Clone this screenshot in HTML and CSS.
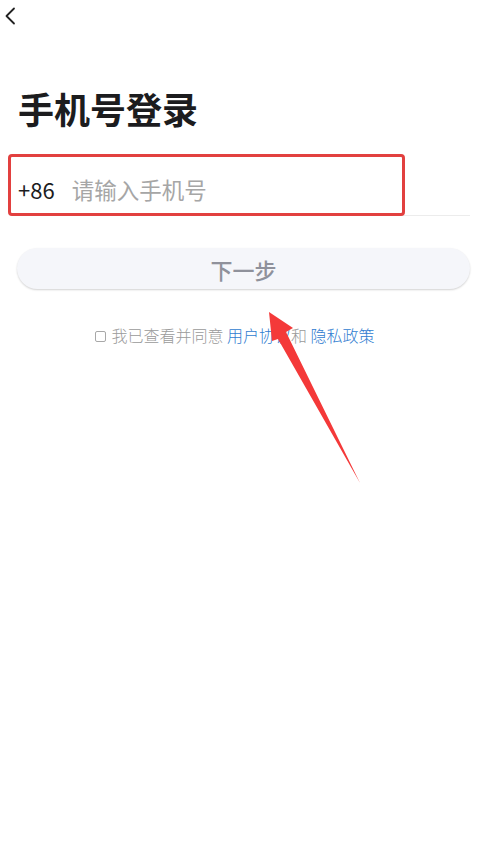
FILE: index.html
```html
<!DOCTYPE html>
<html lang="zh-CN">
<head>
  <meta charset="UTF-8">
  <title>手机号登录</title>
  <link rel="stylesheet" href="styles.css">
</head>
<body>

  <header class="topbar">
    <a class="back">
      <svg width="12" height="18" viewBox="0 0 12 18">
        <polyline points="10,1.5 2.5,9 10,16.5" fill="none" stroke="#222" stroke-width="1.8" stroke-linecap="round" stroke-linejoin="round"/>
      </svg>
    </a>
  </header>

  <main class="login">
    <h1 class="title">手机号登录</h1>

    <div class="phone-row">
      <span class="prefix">+86</span>
      <input type="tel" class="phone-input" placeholder="请输入手机号">
      <!-- zaznaczenie -->
      <div class="highlight"></div>
    </div>

    <button class="next-btn">下一步</button>

    <p class="agreement">
      <span class="check"></span>我已查看并同意 <a>用户协议</a>和 <a>隐私政策</a>
    </p>
  </main>

  <!-- strzałka -->
  <svg class="arrow" width="486" height="853" viewBox="0 0 486 853">
    <polygon points="269,312 293,328 286,332 360,483 278,339 272,341" fill="#f43939"/>
  </svg>

</body>
</html>
```

FILE: styles.css
```css
body {
  font-family: "Noto Sans CJK SC", "Noto Sans", sans-serif;
  background: #fff;
  margin: 0;
  padding: 0;
  position: relative;
  min-height: 853px;
}
.topbar {
  height: 30px;
  padding: 6px 0 0 4px;
  box-sizing: border-box;
}
.back {
  display: inline-block;
}
.login {
  padding: 0 16px 0 18px;
}
.title {
  margin: 52px 0 0 0;
  font-size: 36px;
  line-height: 52px;
  font-weight: 700;
  color: #1c1c1e;
}
.phone-row {
  position: relative;
  display: flex;
  align-items: center;
  height: 62px;
  box-sizing: border-box;
  padding-top: 9px;
  margin-top: 20px;
  border-bottom: 1px solid #ececec;
}
.prefix {
  font-size: 22px;
  color: #1c1c1e;
  margin-right: 17px;
}
.phone-input {
  border: none;
  outline: none;
  font-family: inherit;
  font-size: 22.5px;
  padding: 0;
  flex: 1;
  color: #1c1c1e;
}
.phone-input::placeholder {
  color: #a6a6a6;
}
.highlight {
  position: absolute;
  left: -10px;
  top: 0;
  width: 397px;
  height: 62px;
  box-sizing: border-box;
  border: 3px solid #e2403f;
  border-radius: 4px;
}
.next-btn {
  display: block;
  width: calc(100% + 1px);
  margin: 32px 0 0 -1px;
  height: 41px;
  border: none;
  border-radius: 21px;
  background: #f5f6fa;
  box-shadow: 0 1px 2px rgba(0, 0, 0, 0.18);
  font-family: inherit;
  font-size: 22px;
  font-weight: 500;
  color: #8f919b;
}
.agreement {
  margin: 34px 0 0 0;
  text-align: center;
  font-size: 16px;
  font-weight: 300;
  color: #9a9a9a;
  padding-right: 18px;
}
.agreement a {
  color: #2f7cd0;
}
.check {
  display: inline-block;
  width: 9px;
  height: 9px;
  border: 1px solid #a8a8a8;
  border-radius: 2px;
  margin-right: 5px;
  vertical-align: 0;
}
.arrow {
  position: absolute;
  left: 0;
  top: 0;
  pointer-events: none;
}
```
